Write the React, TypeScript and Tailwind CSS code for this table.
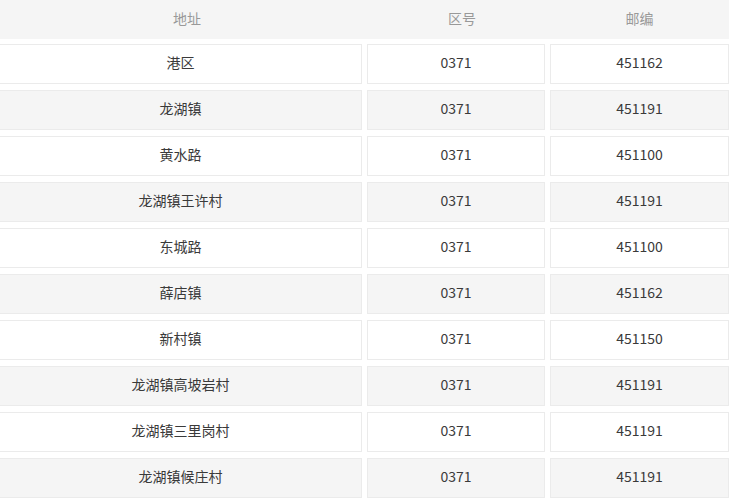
import React from "react";

interface Row {
  addr: string;
  code: string;
  zip: string;
}

const rows: Row[] = [
  { addr: "港区", code: "0371", zip: "451162" },
  { addr: "龙湖镇", code: "0371", zip: "451191" },
  { addr: "黄水路", code: "0371", zip: "451100" },
  { addr: "龙湖镇王许村", code: "0371", zip: "451191" },
  { addr: "东城路", code: "0371", zip: "451100" },
  { addr: "薛店镇", code: "0371", zip: "451162" },
  { addr: "新村镇", code: "0371", zip: "451150" },
  { addr: "龙湖镇高坡岩村", code: "0371", zip: "451191" },
  { addr: "龙湖镇三里岗村", code: "0371", zip: "451191" },
  { addr: "龙湖镇候庄村", code: "0371", zip: "451191" },
];

const cell =
  "h-[40px] pb-[3px] flex items-center justify-center border border-[#ebebeb] shrink-0";

const App: React.FC = () => {
  return (
    <div
      className="w-[734px] h-[503px] overflow-hidden bg-white text-[14px] text-[#3a3a3a]"
      style={{ fontFamily: '"Noto Sans CJK SC", "Microsoft YaHei", sans-serif' }}
    >
      {/* Header */}
      <div className="flex w-[729px] h-[39px] pb-[2px] bg-[#f5f5f5] text-[#999] items-center">
        <div className="w-[374px] text-center">地址</div>
        <div className="w-[176px] text-center">区号</div>
        <div className="w-[179px] text-center">邮编</div>
      </div>

      {/* Body */}
      <div className="flex flex-col gap-[6px] mt-[5px]">
        {rows.map((r, i) => {
          const bg = i % 2 === 1 ? "bg-[#f5f5f5]" : "bg-white";
          return (
            <div key={i} className="flex gap-[5px] ml-[-1px]">
              <div className={`${cell} ${bg} w-[363px]`}>{r.addr}</div>
              <div className={`${cell} ${bg} w-[178px]`}>{r.code}</div>
              <div className={`${cell} ${bg} w-[179px]`}>{r.zip}</div>
            </div>
          );
        })}
      </div>
    </div>
  );
};

export default App;
